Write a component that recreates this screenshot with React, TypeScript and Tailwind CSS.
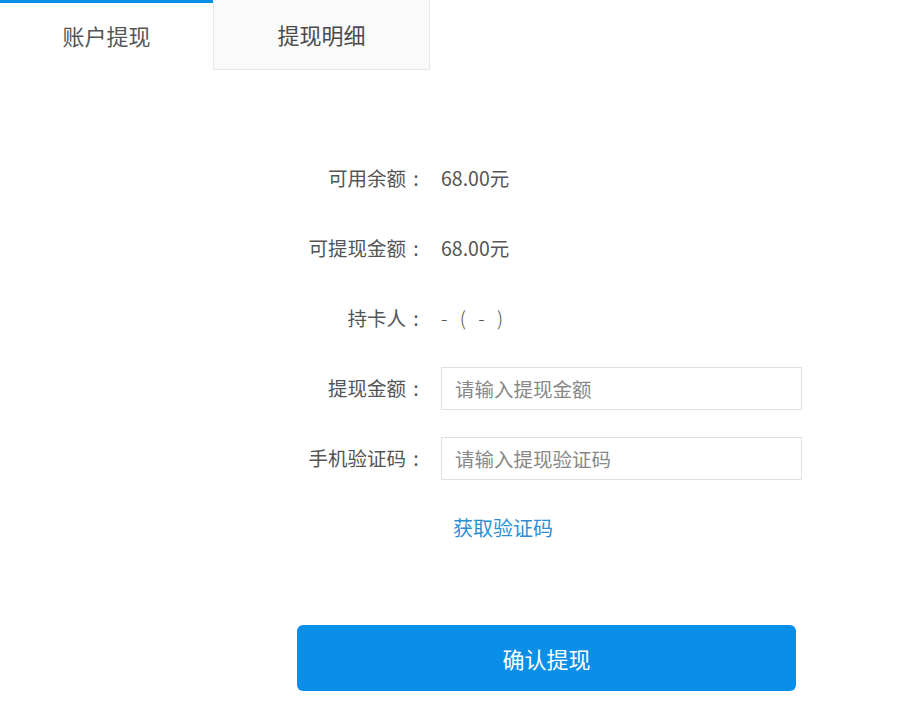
const font = { fontFamily: '"Noto Sans CJK SC", "Noto Sans", sans-serif' };

function InfoRow({ label, children }: { label: string; children: React.ReactNode }) {
  return (
    <div className="flex h-[70px] items-center">
      <div className="flex w-[426px] shrink-0 justify-end text-[19.5px] text-[#555]">
        <span>{label}</span>
        <span className="w-[20px] text-center">:</span>
      </div>
      <div className="ml-[15px] flex-1 text-[19.5px] text-[#555]">{children}</div>
    </div>
  );
}

export default function App() {
  return (
    <div className="min-h-[704px] w-[897px] bg-white" style={font}>
      {/* tabs */}
      <div className="flex h-[70px]">
        <div className="flex w-[213px] items-center justify-center border-t-[3px] border-[#0a8fe9] pb-[3px] text-[22px] text-[#555]">
          账户提现
        </div>
        <div className="flex w-[217px] items-center justify-center border border-t-0 border-[#e6e6e6] bg-[#fafafa] text-[22px] text-[#4a4a4a]">
          提现明细
        </div>
      </div>

      <div className="pt-[73px]">
        <InfoRow label="可用余额">68.00元</InfoRow>
        <InfoRow label="可提现金额">68.00元</InfoRow>
        <InfoRow label="持卡人">
          <span className="font-light tracking-[4px]">-&nbsp;(&nbsp;-&nbsp;)</span>
        </InfoRow>
        <InfoRow label="提现金额">
          <input
            className="h-[43px] w-[361px] border border-[#e0e0e0] px-[13px] text-[19.5px] text-[#555] outline-none placeholder:text-[#888]"
            placeholder="请输入提现金额"
          />
        </InfoRow>
        <InfoRow label="手机验证码">
          <input
            className="h-[43px] w-[361px] border border-[#e0e0e0] px-[13px] text-[19.5px] text-[#555] outline-none placeholder:text-[#888]"
            placeholder="请输入提现验证码"
          />
        </InfoRow>
        <div className="flex h-[70px] items-center pl-[453px]">
          <a className="cursor-pointer text-[20px] text-[#2b8fd2]">获取验证码</a>
        </div>

        <div className="mt-[62px] pl-[297px]">
          <button className="h-[66px] w-[499px] rounded-[6px] bg-[#0a8fe9] text-[22px] text-white">
            确认提现
          </button>
        </div>
      </div>
    </div>
  );
}
